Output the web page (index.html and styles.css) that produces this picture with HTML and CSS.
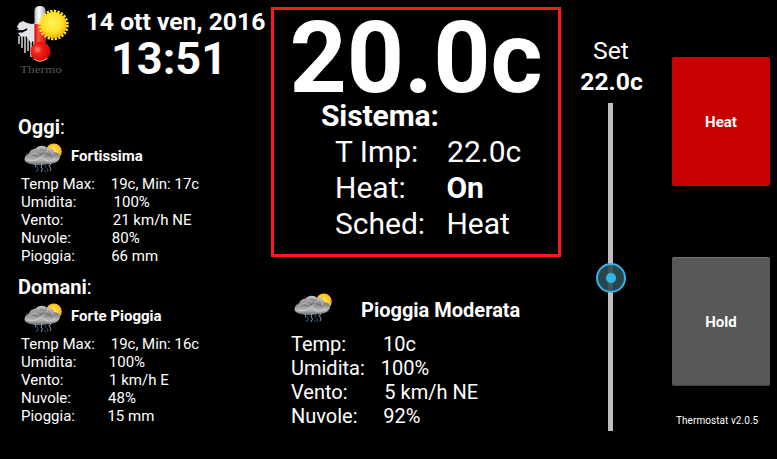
FILE: index.html
```html
<!DOCTYPE html>
<html lang="it">
<head>
<meta charset="utf-8">
<title>Thermostat</title>
<link rel="stylesheet" href="styles.css">
</head>
<body>
<svg width="0" height="0" class="defs">
  <defs>
    <radialGradient id="sun" cx=".5" cy=".45" r=".55"><stop offset="0" stop-color="#ffef4a"/><stop offset=".65" stop-color="#ffc526"/><stop offset="1" stop-color="#ef9b16"/></radialGradient>
    <linearGradient id="cloud" x1="0" y1="0" x2="0" y2="1"><stop offset="0" stop-color="#c4c4c4"/><stop offset=".45" stop-color="#868686"/><stop offset=".75" stop-color="#b9b9b9"/><stop offset="1" stop-color="#62666c"/></linearGradient>
    <symbol id="storm" viewBox="0 0 40 32">
      <circle cx="29.800" cy="8.500" r="8" fill="url(#sun)"/>
      <path d="M1 18C-.4 14.500 2 11.300 5 10.300C6 7 9 5.800 11.500 5.700C14 2 20.500 1.800 23 4.800C26.500 4 29.500 6.300 30.300 9C35 9.300 38 13 35 16.500C33 20 28 20.800 24 21.100C17 22.800 4 22.300 1 18Z" fill="url(#cloud)"/>
      <path d="M5 13Q10 8 14 12T22 9T29 12M4 17Q9 19 14 16T22 17T32 15" fill="none" stroke="#e6e6e6" stroke-width="1.400" opacity=".4"/>
      <path d="M10 12Q15 14 18 11T28 14M16 6Q20 8 23 7" fill="none" stroke="#555" stroke-width="1.200" opacity=".45"/>
      <path d="M10.500 20.500L12 23L11 24.500M18 20.500L17 24L18.500 26L17 29M27 20L25.500 23L27 26L26 28" fill="none" stroke="#a4c2de" stroke-width=".8"/>
      <path d="M13 23l1 3M15 26l-2 2M21 21l1 4M20 27l2 2M23 25l1 4M12 27l1 2M25 21l-1 2" stroke="#2c5276" stroke-width="1" fill="none"/>
    </symbol>
  </defs>
</svg>
<main class="screen">
  <section class="left">
    <header class="top">
      <svg class="logo" width="60" height="76" viewBox="0 0 60 76">
        <defs>
          <radialGradient id="bulb" cx=".35" cy=".4" r=".7"><stop offset="0" stop-color="#ff8a70"/><stop offset=".3" stop-color="#f5231c"/><stop offset="1" stop-color="#cc0000"/></radialGradient>
          <linearGradient id="tube"><stop offset="0" stop-color="#b8b8c2"/><stop offset=".4" stop-color="#fff"/><stop offset="1" stop-color="#a5a5b0"/></linearGradient>
          <linearGradient id="fluid"><stop offset="0" stop-color="#d40808"/><stop offset=".35" stop-color="#ff5347"/><stop offset="1" stop-color="#e00b0b"/></linearGradient>
          <radialGradient id="bigsun" cx=".45" cy=".4" r=".6"><stop offset="0" stop-color="#fff45e"/><stop offset=".65" stop-color="#ffe022"/><stop offset="1" stop-color="#f3af12"/></radialGradient>
        </defs>
        <path d="M0 31L5 29L3 27L5 23L9 21L13 23L18 24L27 22V38L24 45L19 41L17 43L12 36L7 37L4 33L13 30L8 30Z" fill="#e3e3e9"/>
        <path d="M1 30L8 32L13 29" fill="none" stroke="#000" stroke-width="1.500"/>
        <path d="M5 36V44M8 36V48M11 36V53M14 38V51M17 38V57M20 38V55M23 38V52" stroke="#e7e7ed" stroke-width="1.400"/>
        <path d="M20.500 11Q20.500 6 26 6T31.500 11V45H20.500Z" fill="url(#tube)"/>
        <path d="M20.500 24H31.500V45H20.500Z" fill="url(#fluid)"/>
        <circle cx="26.500" cy="51.500" r="10" fill="url(#bulb)"/>
        <path d="M20 59Q26.500 64 33 58" fill="none" stroke="#ffb0a4" stroke-width="1"/>
        <circle cx="39.500" cy="25" r="13.800" fill="none" stroke="#ffe532" stroke-width="2.800" stroke-dasharray="2.300 1.310"/>
        <circle cx="39.500" cy="25" r="13" fill="url(#bigsun)"/>
        <text x="6" y="72.500" class="brand" textLength="42" lengthAdjust="spacingAndGlyphs">Thermo</text>
      </svg>
      <div class="clock">
        <div class="date">14 ott ven, 2016</div>
        <div class="time">13:51</div>
      </div>
    </header>
    <article class="day">
      <h2><b>Oggi</b>:</h2>
      <div class="cond"><svg class="wx"><use href="#storm"/></svg><b>Fortissima</b></div>
      <div class="rows"><span class="wide">Temp Max:</span>    19c, Min: 17c
Umidita:          100%
<span class="wide">Vento:</span>             21 km/h NE
Nuvole:           80%
<span class="tight">Pioggia:</span>          66 mm</div>
    </article>
    <article class="day">
      <h2><b>Domani</b>:</h2>
      <div class="cond"><svg class="wx"><use href="#storm"/></svg><b>Forte Pioggia</b></div>
      <div class="rows"><span class="wide">Temp Max:</span>    19c, Min: 16c
<span class="tight">Umidita:</span>         100%
<span class="wide">Vento:</span>            1 km/h E
Nuvole:          48%
<span class="tight">Pioggia:</span>         15 mm</div>
    </article>
  </section>
  <section class="center">
    <div class="system">
      <div class="current">20.0c</div>
      <h1>Sistema:</h1>
      <div class="status"><span class="tight">T Imp:</span>    22.0c
<span class="tighter">Heat:</span>      <b>On</b>
<span class="tight">Sched:</span>   Heat</div>
    </div>
    <div class="now">
      <div class="nowcond"><svg class="wx"><use href="#storm"/></svg><b>Pioggia Moderata</b></div>
      <div class="nowrows"><span class="wider">Temp:</span>       10c
<span class="wide">Umidita:</span>   100%
<span class="wider">Vento:</span>       5 km/h NE
<span class="wide">Nuvole:</span>     92%</div>
    </div>
  </section>
  <section class="setpoint">
    <div class="setlabel">Set</div>
    <div class="setvalue">22.0c</div>
    <div class="track"><div class="knob"></div></div>
  </section>
  <section class="actions">
    <button class="heat">Heat</button>
    <button class="hold">Hold</button>
    <div class="version">Thermostat v2.0.5</div>
  </section>
</main>
</body>
</html>
```

FILE: styles.css
```css
* { box-sizing: border-box; }
body { margin: 0; background: #000; color: #fff; font-family: Roboto, sans-serif; }
.defs { display: block; }
.screen { display: grid; grid-template-columns: 271px 290px 99px 117px; height: 459px; overflow: hidden; }
h1, h2 { margin: 0; font-weight: 400; }
.top { display: flex; height: 115px; padding-left: 14px; }
.brand { font: 11px "Liberation Serif", serif; fill: #555; }
.clock { flex: none; width: 203px; padding-top: 7px; text-align: center; white-space: nowrap; }
.logo { flex: none; }
.date { font-size: 24.7px; font-weight: 700; line-height: 30px; }
.time { font-size: 45px; font-weight: 700; line-height: 44px; margin-right: 13px; }
.day { height: 160px; padding-left: 18px; }
.day h2 { font-size: 20px; line-height: 24px; }
.cond { display: flex; align-items: center; height: 34px; margin-bottom: 2px; padding-left: 6px; gap: 7px; font-size: 15px; line-height: 18px; }
.wx { width: 40px; height: 32px; flex: none; }
.cond .wx { margin-top: 4px; margin-bottom: -2px; }
.rows { white-space: pre; font-size: 15px; line-height: 18px; padding-left: 3px; }
.wide { margin-right: 1px; }
.wider { margin-right: 2px; }
.tight { margin-right: -1px; }
.tighter { margin-right: -4px; }
.center { padding-top: 7px; }
.system { height: 250px; border: 3px solid #ff1a1a; padding-top: 8px; }
.current { font-size: 100px; font-weight: 700; line-height: 80px; text-align: center; }
.system h1 { font-size: 30px; font-weight: 700; line-height: 36px; padding-left: 47px; letter-spacing: -.1px; }
.status { white-space: pre; font-size: 30px; line-height: 36px; padding-left: 61px; }
.now { padding: 34px 0 0 20px; font-size: 20px; line-height: 24px; }
.nowcond { display: flex; height: 41px; gap: 27px; padding-left: 3px; }
.nowcond .wx { margin-top: 2px; }
.nowcond b { padding-top: 7px; }
.nowrows { white-space: pre; }
.setpoint { display: flex; flex-direction: column; align-items: center; padding-top: 36px; font-size: 24.7px; line-height: 30px; }
.setlabel { margin-left: 1px; }
.setvalue { font-weight: 700; margin-left: 2px; padding-top: 1px; }
.track { display: flex; justify-content: center; width: 5px; height: 328px; margin-top: 6px; background: #bebebe; }
.knob { flex: none; width: 30px; height: 30px; margin-top: 160px; border-radius: 50%; border: 2px solid #33b5e5; background: radial-gradient(circle, #33b5e5 0 4.5px, rgba(51,181,229,0) 5.5px), rgba(46,76,87,.9); }
.actions { display: flex; flex-direction: column; padding: 57px 7px 0 12px; }
.actions button { width: 98px; height: 129px; border: 0; border-radius: 2px; color: #fff; font: 700 15px Roboto, sans-serif; }
.heat { background: #c80000; }
.actions .hold { margin-top: 71px; background: #585858; border-top: 1px solid #707070; border-bottom: 1px solid #414141; }
.version { margin-top: 29px; padding-left: 4px; font-size: 10px; line-height: 12px; white-space: nowrap; letter-spacing: .06px; }
```
